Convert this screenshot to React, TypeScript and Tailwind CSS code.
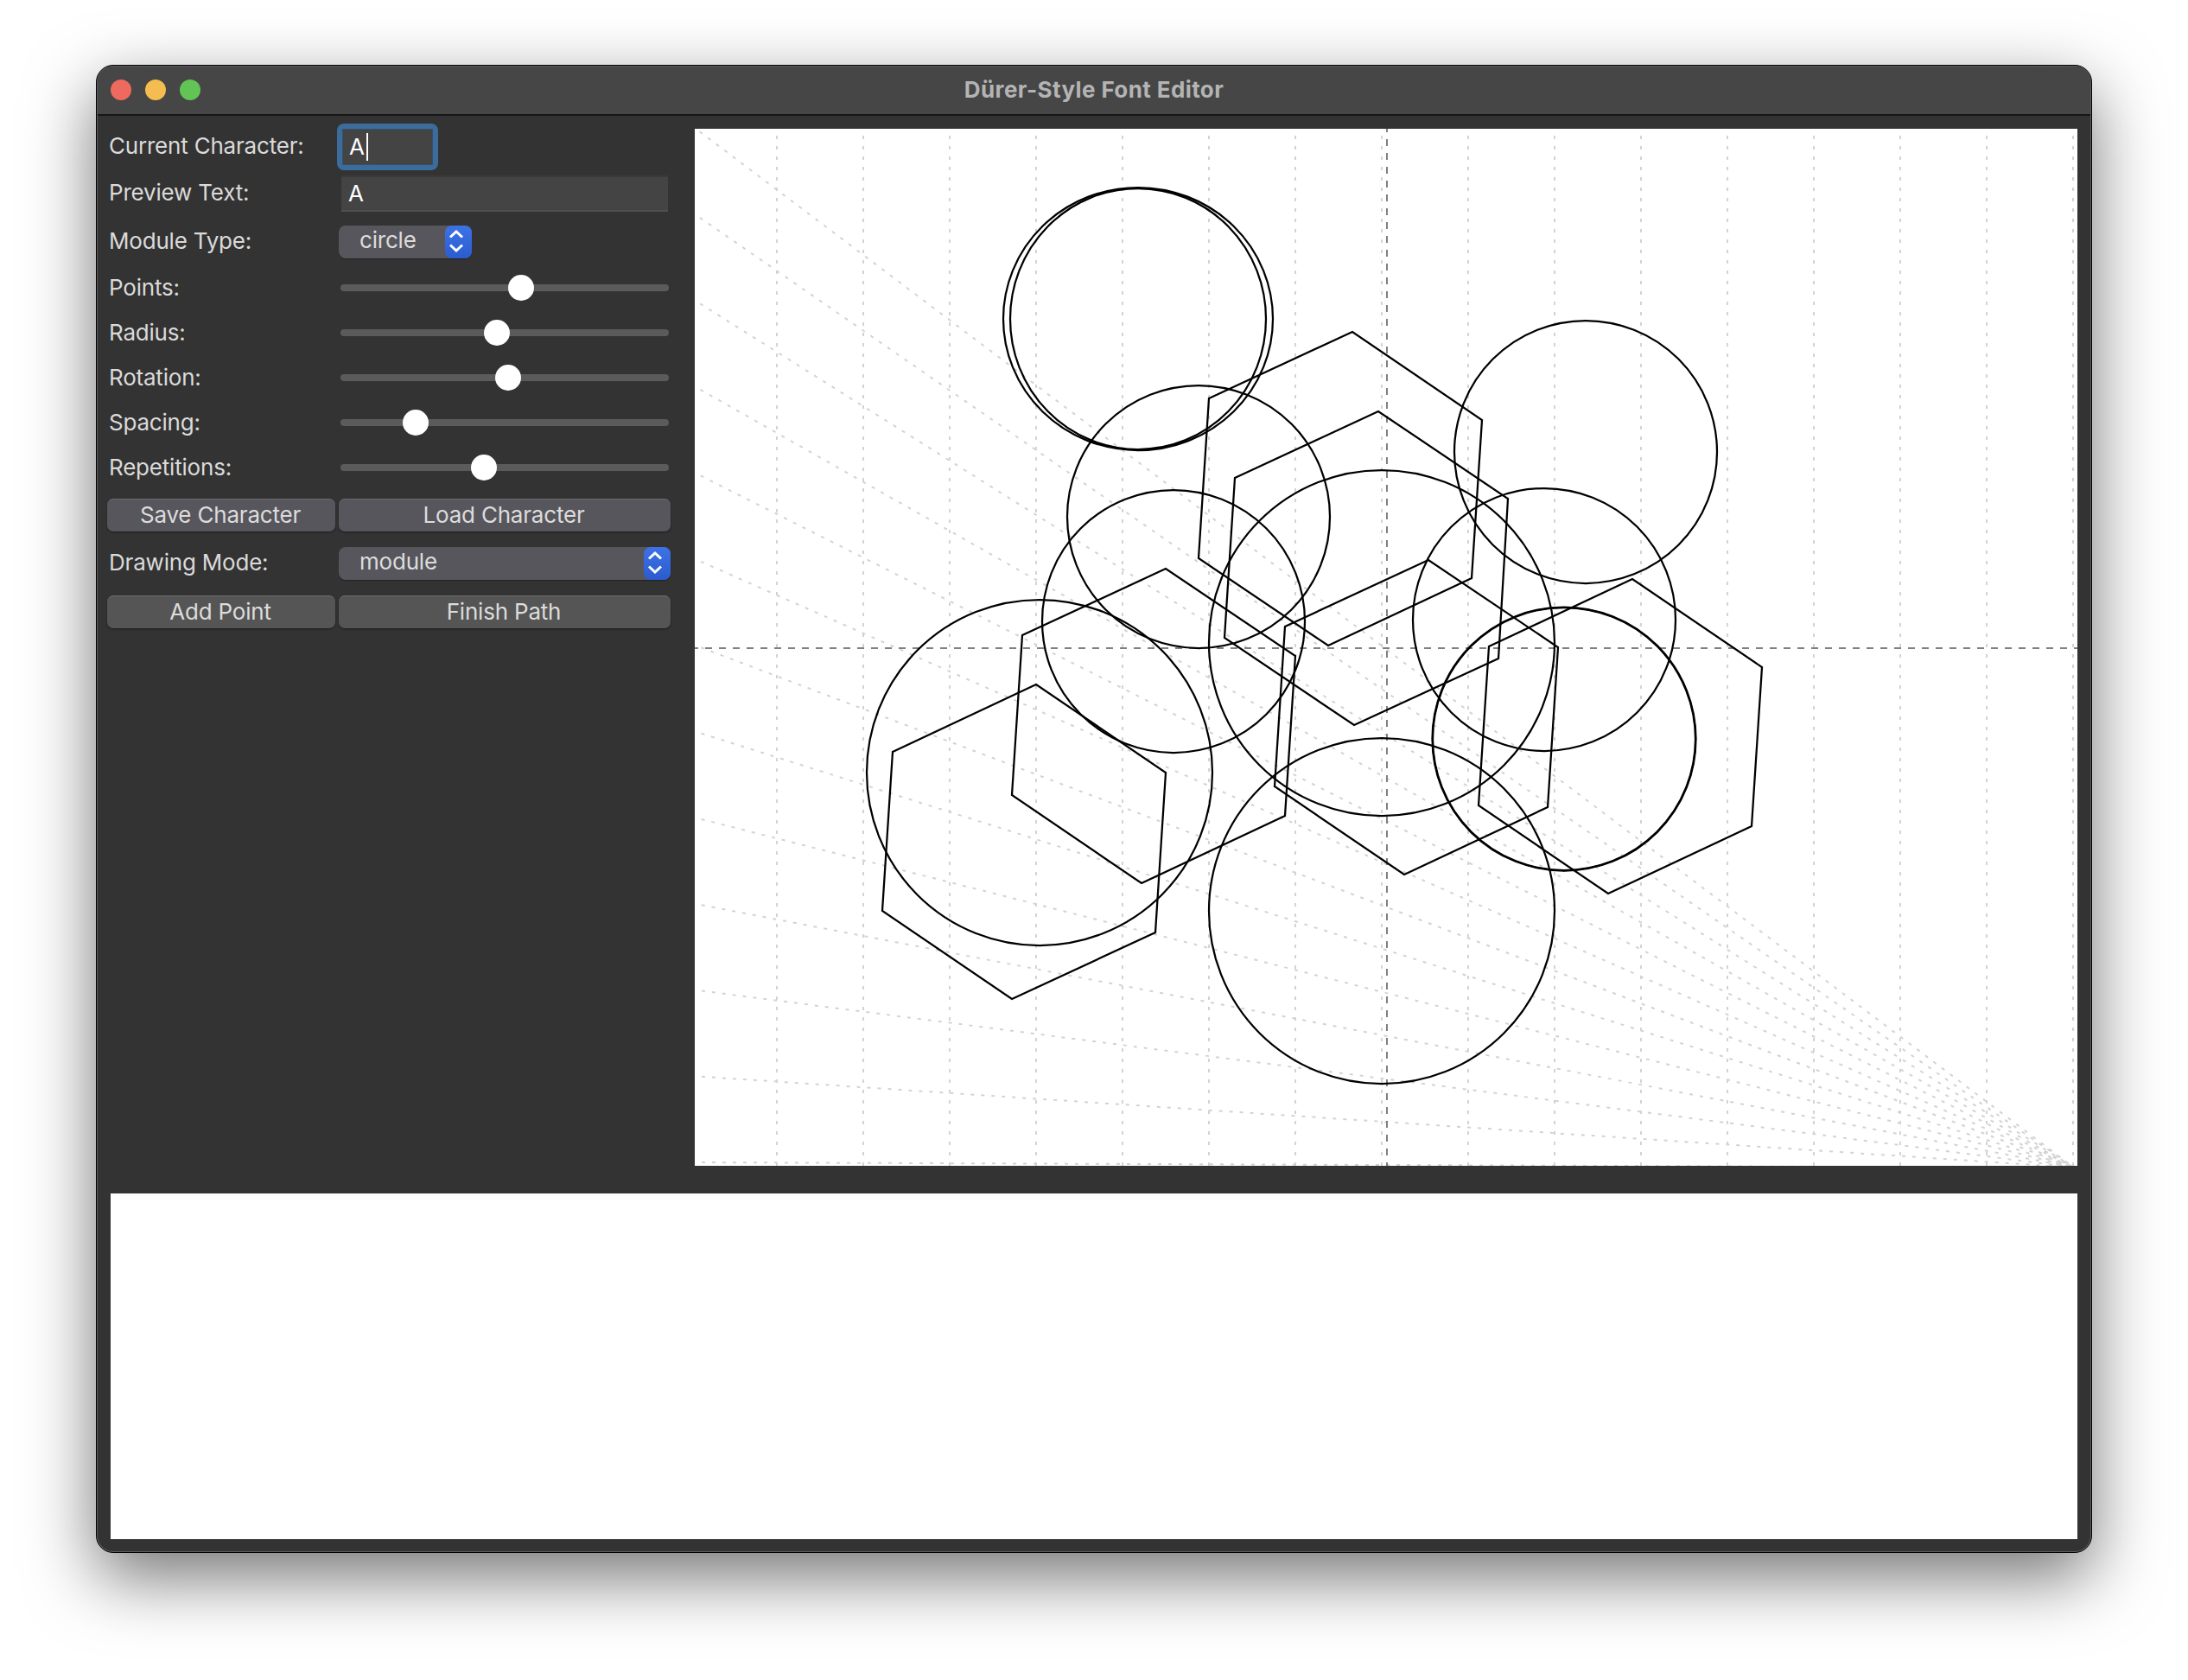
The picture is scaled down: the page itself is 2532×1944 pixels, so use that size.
const hexagons = [
  '1399,460 1565,383 1715,485 1703,668 1537,746 1387,645',
  '1429,552 1595,475 1745,576 1734,761 1567,838 1417,737',
  '1183,734 1349,657 1499,758 1487,943 1321,1021 1171,919',
  '1033,869 1199,791 1349,893 1337,1078 1171,1155 1021,1053',
  '1487,724 1653,647 1803,748 1791,933 1625,1011 1475,909',
  '1723,747 1889,669 2039,771 2027,955 1861,1033 1711,931',
];

const ellipses = [
  { cx: 1317, cy: 368, rx: 156, ry: 152 },
  { cx: 1317, cy: 368, rx: 148, ry: 151 },
  { cx: 1387, cy: 597, rx: 152, ry: 152 },
  { cx: 1358, cy: 718, rx: 152, ry: 152 },
  { cx: 1203, cy: 893, rx: 200, ry: 200 },
  { cx: 1599, cy: 743, rx: 200, ry: 200 },
  { cx: 1599, cy: 1053, rx: 200, ry: 200 },
  { cx: 1835, cy: 522, rx: 152, ry: 152 },
  { cx: 1787, cy: 716, rx: 152, ry: 152 },
  { cx: 1810, cy: 854, rx: 152, ry: 152 },
  { cx: 1810, cy: 854, rx: 152.5, ry: 152.5 },
];

const sliders = [
  { label: 'Points:', thumb: 209 },
  { label: 'Radius:', thumb: 181 },
  { label: 'Rotation:', thumb: 194 },
  { label: 'Spacing:', thumb: 87 },
  { label: 'Repetitions:', thumb: 166 },
];

const gridX = Array.from({ length: 16 }, (_, i) => 899 + i * 100);
const fanY = Array.from({ length: 13 }, (_, i) => 144 + i * 100);

const Stepper = () => (
  <span className="flex h-[38px] w-[31px] shrink-0 rounded-[8px] bg-gradient-to-b from-[#3d72e6] to-[#2a5ccf]">
    <svg width="31" height="38" viewBox="0 0 31 38" fill="none" stroke="#fff" strokeWidth="3">
      <path d="M6 13.5 13 7 20 13.5" />
      <path d="M6 22.5 13 29 20 22.5" />
    </svg>
  </span>
);

const Label = ({ children }: { children: string }) => (
  <span className="w-[266px] shrink-0 pb-[2px] pl-[2px] text-[26px] leading-none tracking-[-0.2px] text-[#dadada]">
    {children}
  </span>
);

const Select = ({ value, width }: { value: string; width: string }) => (
  <div className={`ml-[2px] flex h-[38px] items-center justify-between rounded-[8px] bg-[#58565d] shadow-[0_1px_1px_#222] ${width}`}>
    <span className="mb-[4px] pl-[24px] text-[26px] leading-none tracking-[-0.2px] text-[#dcdcdc]">{value}</span>
    <Stepper />
  </div>
);

const Button = ({ children, width, tone }: { children: string; width: string; tone: string }) => (
  <button className={`h-[38px] rounded-[7px] border-t border-[#6e6e6e] pb-[2px] pr-[2px] text-[26px] leading-none tracking-[-0.2px] text-[#dcdcdc] shadow-[0_1px_2px_#1c1c1c] ${width} ${tone}`}>
    {children}
  </button>
);

const Slider = ({ label, thumb }: { label: string; thumb: number }) => (
  <div className="flex h-[52px] items-center">
    <span className="w-[266px] shrink-0 pl-[2px] text-[26px] leading-none tracking-[-0.2px] text-[#dadada]">
      {label}
    </span>
    <div className="relative ml-[4px] h-[8px] w-[380px] rounded-full bg-[#5b5b5b]">
      <span
        className="absolute top-[-11px] ml-[-15px] h-[30px] w-[30px] rounded-full bg-white"
        style={{ left: thumb }}
      />
    </div>
  </div>
);

const Canvas = () => (
  <div className="h-[1200px] w-[1600px] bg-white">
    <svg width="1600" height="1200" viewBox="804 148 1600 1200" fill="none">
      {fanY.map((y) => (
        <line key={y} x1="800" y1={y} x2="2400" y2="1350" stroke="#d3d3d3" strokeWidth="2" strokeDasharray="4 8" />
      ))}
      {gridX.map((x) => (
        <line key={x} x1={x} y1="144" x2={x} y2="1348" stroke="#d3d3d3" strokeWidth="2" strokeDasharray="4 8" />
      ))}
      <line x1="1605" y1="144" x2="1605" y2="1348" stroke="#808080" strokeWidth="2" strokeDasharray="8 8" />
      <line x1="800" y1="749" x2="2404" y2="749" stroke="#808080" strokeWidth="2" strokeDasharray="8 8" />
      {ellipses.map((e, i) => (
        <ellipse key={i} cx={e.cx} cy={e.cy} rx={e.rx} ry={e.ry} stroke="#000" strokeWidth="2.25" />
      ))}
      {hexagons.map((points) => (
        <polygon key={points} points={points} stroke="#000" strokeWidth="2.25" />
      ))}
    </svg>
  </div>
);

export default function App() {
  return (
    <div className="h-[1944px] w-[2532px] bg-white pl-[111px] pt-[75px] font-['Inter',sans-serif]">
      <div className="h-[1722px] w-[2310px] rounded-[20px] border border-black bg-[#5e5e5e] p-px shadow-[0_28px_80px_rgba(0,0,0,0.55)]">
        <div className="h-full overflow-hidden rounded-[18px] bg-[#333333]">
          <div className="relative flex h-[57px] items-center border-b-2 border-[#161616] bg-[#464646] pb-[2px] pl-[15px]">
            <div className="flex gap-[16px]">
              <span className="h-[24px] w-[24px] rounded-full bg-[#ee6a5f]" />
              <span className="h-[24px] w-[24px] rounded-full bg-[#f5bd4f]" />
              <span className="h-[24px] w-[24px] rounded-full bg-[#61c454]" />
            </div>
            <span className="absolute inset-x-0 text-center text-[26px] font-bold leading-none tracking-[0.4px] text-[#b4b4b4]">
              Dürer-Style Font Editor
            </span>
          </div>
          <div className="flex flex-col px-[15px] pb-[15px] pt-[15px]">
            <div className="flex">
              <div className="ml-[-4px] w-[680px] shrink-0">
                <div className="mt-[-6px] flex h-[54px] items-center">
                  <Label>Current Character:</Label>
                  <div className="h-[54px] w-[117px] rounded-[8px] bg-[#3c6c9c] p-[6px]">
                    <div className="flex h-full items-center border border-[#35506c] bg-[#444444] pl-[7px] text-[26px] leading-none text-white">
                      A<span className="ml-[2px] h-[32px] w-[2px] bg-white" />
                    </div>
                  </div>
                </div>
                <div className="mt-[6px] flex h-[42px] items-center">
                  <Label>Preview Text:</Label>
                  <div className="ml-[5px] flex h-[42px] w-[378px] items-center border-y-2 border-t-[#3a3a3a] border-b-[#505050] bg-[#444444] pl-[8px] text-[26px] leading-none text-white">
                    A
                  </div>
                </div>
                <div className="mt-[16px] flex h-[38px] items-center">
                  <Label>Module Type:</Label>
                  <Select value="circle" width="w-[154px]" />
                </div>
                <div className="mt-[8px]">
                  {sliders.map((s) => (
                    <Slider key={s.label} label={s.label} thumb={s.thumb} />
                  ))}
                </div>
                <div className="mt-[10px] flex gap-[4px]">
                  <Button width="w-[264px]" tone="bg-[#58565d]">Save Character</Button>
                  <Button width="w-[384px]" tone="bg-[#58565d]">Load Character</Button>
                </div>
                <div className="mt-[18px] flex h-[38px] items-center">
                  <Label>Drawing Mode:</Label>
                  <Select value="module" width="w-[384px]" />
                </div>
                <div className="mt-[18px] flex gap-[4px]">
                  <Button width="w-[264px]" tone="bg-[#555555]">Add Point</Button>
                  <Button width="w-[384px]" tone="bg-[#555555]">Finish Path</Button>
                </div>
              </div>
              <Canvas />
            </div>
            <div className="mt-[32px] h-[400px] w-[2276px] bg-white" />
          </div>
        </div>
      </div>
    </div>
  );
}
